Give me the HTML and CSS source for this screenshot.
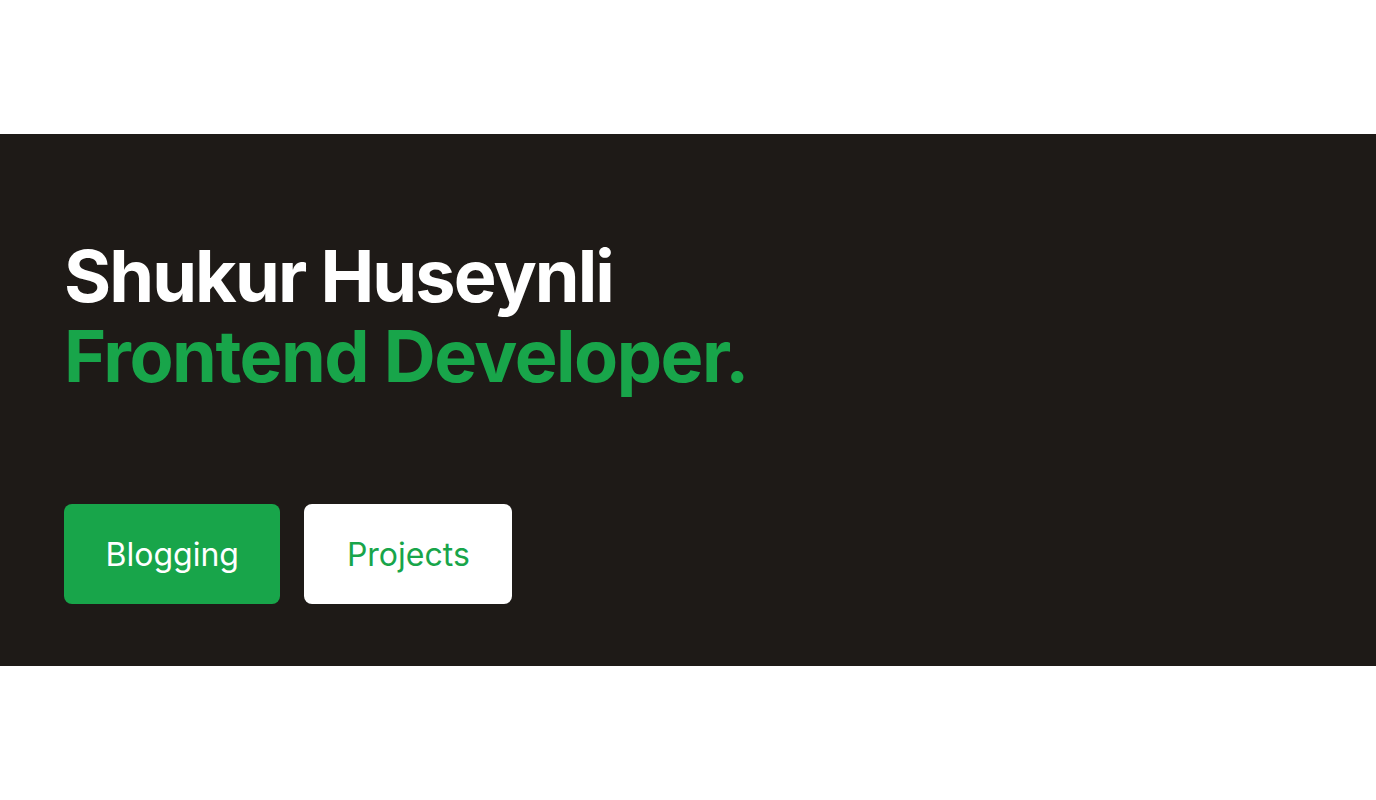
FILE: index.html
```html
<!DOCTYPE html>
<html lang="en">
<head>
<meta charset="utf-8">
<title>Shukur Huseynli</title>
<link rel="stylesheet" href="styles.css">
</head>
<body>
  <header class="top-space"></header>
  <section class="hero">
    <h1 class="hero-title">
      <span class="hero-name">Shukur Huseynli</span>
      <span class="hero-role">Frontend Developer.</span>
    </h1>
    <div class="hero-actions">
      <a class="btn btn-primary" href="#">Blogging</a>
      <a class="btn btn-secondary" href="#">Projects</a>
    </div>
  </section>
  <footer class="bottom-space"></footer>
</body>
</html>
```
FILE: styles.css
```css
* { box-sizing: border-box; }
html, body { margin: 0; padding: 0; background: #ffffff; }
body { font-family: Inter, "Noto Sans", sans-serif; }
.top-space { height: 134px; }
.hero {
  background: #1e1a17;
  height: 532px;
  padding: 102px 64px 0;
  display: flex;
  flex-direction: column;
}
.hero-title {
  margin: 0;
  font-size: 72px;
  line-height: 80px;
  font-weight: 700;
  letter-spacing: -1.65px;
  display: flex;
  flex-direction: column;
}
.hero-name { color: #ffffff; letter-spacing: -1.9px; }
.hero-role { color: #18a54a; letter-spacing: -1.5px; }
.hero-actions {
  margin-top: 108px;
  display: flex;
  gap: 24px;
}
.btn {
  display: flex;
  align-items: center;
  justify-content: center;
  height: 100px;
  padding: 0 41.5px;
  border-radius: 8px;
  font-size: 32px;
  font-weight: 400;
  text-decoration: none;
}
.btn-primary { background: #18a54a; color: #ffffff; }
.btn-secondary { background: #ffffff; color: #18a54a; padding: 0 42.5px; }
.bottom-space { height: 134px; }
```
